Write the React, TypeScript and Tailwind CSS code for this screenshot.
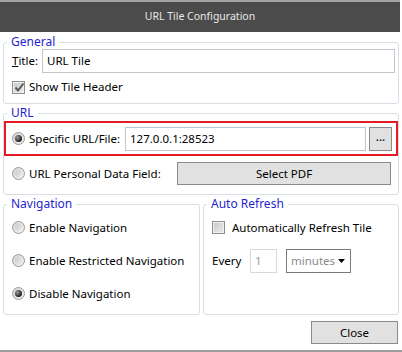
function Radio({ on }: { on?: boolean }) {
  return (
    <span className="flex h-[13px] w-[13px] shrink-0 items-center justify-center rounded-full border border-[#9a9a9a] bg-gradient-to-br from-[#d4d4d4] to-[#f4f4f4]">
      {on ? (
        <span className="h-[7px] w-[7px] rounded-full bg-[radial-gradient(circle_at_35%_35%,#9a9a9a,#1c1c1c_70%)]" />
      ) : (
        <span className="h-[7px] w-[7px] rounded-full bg-gradient-to-br from-[#c8c8c8] to-[#ececec]" />
      )}
    </span>
  );
}

function Check({ on }: { on?: boolean }) {
  return (
    <span className="flex h-[13px] w-[13px] shrink-0 items-center justify-center border border-[#8e8f8f] bg-[#f0f0f0]">
      <span className="relative flex h-[9px] w-[9px] items-center justify-center bg-gradient-to-br from-[#cbcbcb] to-[#e9e9e9]">
        {on && (
          <svg width="11" height="11" viewBox="0 0 11 11" className="absolute -top-[1px] left-0">
            <path d="M1.5 5.5 L4 8.5 L9.5 1.5" fill="none" stroke="#5a5a5a" strokeWidth="2" />
          </svg>
        )}
      </span>
    </span>
  );
}

function Group({ label, className, children }: { label: string; className?: string; children: React.ReactNode }) {
  return (
    <fieldset className={`rounded-[3px] border border-[#d5dfe5] ${className ?? ''}`}>
      <legend className="ml-[3px] px-[4px] text-[12px] leading-[14px] text-[#1f1fd0]">{label}</legend>
      {children}
    </fieldset>
  );
}

export default function App() {
  return (
    <div
      className="flex h-[352px] w-[402px] flex-col bg-white text-[11.5px] text-black"
      style={{ fontFamily: '"Noto Sans", "Open Sans", Arial, sans-serif' }}
    >
      <div className="flex h-[32px] w-[400px] shrink-0 items-center justify-center border-t-2 border-[#a3a3a3] bg-[#4b4b4b] text-[10.5px] text-[#e8e8e8]">
        URL Tile Configuration
      </div>

      <Group label="General" className="mx-[3px] mt-[3px]">
        <div className="pb-[8px] pl-[8px] pr-[3px]">
          <div className="flex h-[24px] items-center">
            <span className="w-[30px] shrink-0">
              <span className="underline">T</span>itle:
            </span>
            <div className="flex h-[24px] flex-1 items-center border border-[#c3c6cc] px-[4px]">URL Tile</div>
          </div>
          <div className="mt-[6px] flex h-[16px] items-center gap-[4px]">
            <Check on />
            <span>Show Tile Header</span>
          </div>
        </div>
      </Group>

      <Group label="URL" className="mx-[3px] mt-[2px]">
        <div className="pb-[9px]">
          <div className="mt-[1px] flex h-[35px] items-center border-2 border-[#e51c23] pl-[6px] pr-[4px]">
            <Radio on />
            <span className="ml-[4px] w-[96px] shrink-0">Specific URL/File:</span>
            <div className="flex h-[24px] flex-1 items-center border border-[#c3c6cc] px-[4px]">127.0.0.1:28523</div>
            <button className="ml-[3px] flex h-[24px] w-[23px] items-center justify-center border border-[#8a8a8a] bg-[#e1e1e1] pb-[4px] text-[12px]">
              ...
            </button>
          </div>
          <div className="mt-[6px] flex h-[23px] items-center pl-[8px] pr-[7px]">
            <Radio />
            <span className="ml-[4px] w-[148px] shrink-0">URL Personal Data Field:</span>
            <button className="flex h-[23px] flex-1 items-center justify-center border border-[#8a8a8a] bg-[#e1e1e1]">
              Select PDF
            </button>
          </div>
        </div>
      </Group>

      <div className="mx-[3px] mt-[2px] flex gap-[3px]">
        <Group label="Navigation" className="w-[197px]">
          <div className="pb-[4px] pl-[8px]">
            <div className="flex h-[33px] items-center gap-[4px]">
              <Radio />
              <span>Enable Navigation</span>
            </div>
            <div className="flex h-[33px] items-center gap-[4px]">
              <Radio />
              <span>Enable Restricted Navigation</span>
            </div>
            <div className="flex h-[33px] items-center gap-[4px]">
              <Radio on />
              <span>Disable Navigation</span>
            </div>
          </div>
        </Group>
        <Group label="Auto Refresh" className="flex-1">
          <div className="pb-[37px] pl-[8px]">
            <div className="flex h-[33px] items-center gap-[7px]">
              <Check />
              <span>Automatically Refresh Tile</span>
            </div>
            <div className="flex h-[33px] items-center">
              <span className="w-[38px]">Every</span>
              <div className="flex h-[24px] w-[27px] items-center border border-[#d9d9d9] px-[4px] text-[#9a9a9a]">1</div>
              <div className="ml-[9px] flex h-[24px] w-[65px] items-center justify-between border border-[#7a7a7a] pl-[4px] pr-[5px] text-[#8a8a8a]">
                <span>minutes</span>
                <svg width="7" height="4" viewBox="0 0 7 4">
                  <path d="M0 0 H7 L3.5 4 Z" fill="#000" />
                </svg>
              </div>
            </div>
          </div>
        </Group>
      </div>

      <div className="mt-[6px] flex justify-end pr-[4px]">
        <button className="flex h-[23px] w-[87px] items-center justify-center border border-[#8a8a8a] bg-[#e1e1e1]">
          Close
        </button>
      </div>

      <div className="mt-auto h-[2px] bg-[#9e9e9e]" />
    </div>
  );
}
